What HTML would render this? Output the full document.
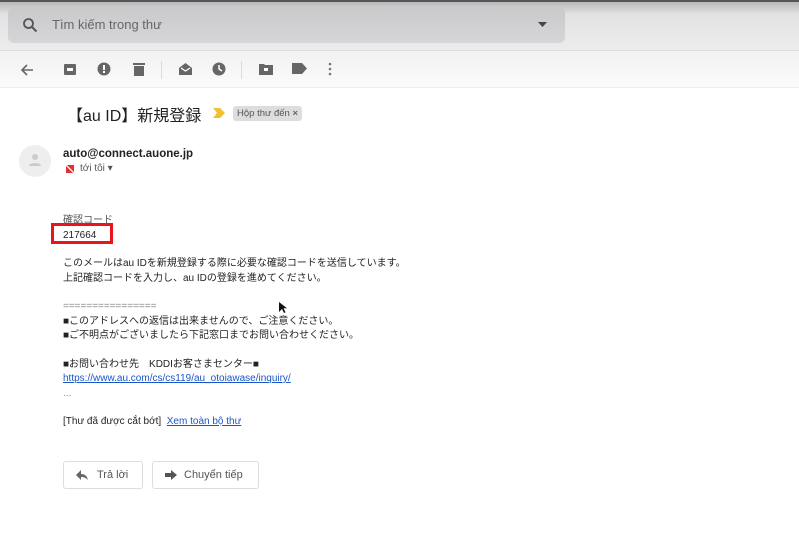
<!DOCTYPE html>
<html><head><meta charset="utf-8"><style>
*{margin:0;padding:0;box-sizing:border-box}
body{width:799px;height:552px;overflow:hidden;background:#fff;font-family:"Liberation Sans","Noto Sans CJK JP",sans-serif;color:#222;position:relative}
.top{position:absolute;left:0;top:0;width:799px;height:50px;background:linear-gradient(#b8b8b8,#e2e2e2 25%,#ececec);border-top:2px solid #555}
.search{position:absolute;left:8px;top:7px;width:557px;height:36px;background:linear-gradient(#c9c9cc,#d6d6d9);border-radius:6px}
.search span{position:absolute;left:44px;top:10px;font-size:13px;color:#666}
.tb{position:absolute;left:0;top:50px;width:799px;height:38px;background:linear-gradient(#f1f1f1,#fbfbfb);border-top:1px solid #ddd;border-bottom:1px solid #eee}
.ic{position:absolute}
.abs{position:absolute;white-space:nowrap}
a{color:#1a55c8;text-decoration:underline}
</style></head><body>
<div class="top"></div>
<div class="search">
<svg class="ic" style="left:14px;top:10px" width="16" height="16" viewBox="0 0 16 16"><circle cx="6.5" cy="6.5" r="4.5" fill="none" stroke="#555" stroke-width="1.8"/><path d="M10 10l4.5 4.5" stroke="#555" stroke-width="2"/></svg>
<span>Tìm kiếm trong thư</span>
<svg class="ic" style="left:530px;top:15px" width="9" height="6"><path d="M0 0h9L4.5 5z" fill="#444"/></svg>
</div>
<div class="tb">
<svg class="ic" style="left:20px;top:12px" width="14" height="14" viewBox="0 0 14 14"><path d="M13 7H2M7 2L2 7l5 5" stroke="#666" stroke-width="1.6" fill="none"/></svg>
<svg class="ic" style="left:63px;top:11px" width="14" height="14"><rect x="1" y="2" width="12" height="11" rx="1" fill="#666"/><rect x="4" y="6" width="6" height="3" fill="#fff"/></svg>
<svg class="ic" style="left:97px;top:11px" width="14" height="14"><circle cx="7" cy="7" r="6.5" fill="#666"/><rect x="6" y="3" width="2" height="5" fill="#fff"/><rect x="6" y="9" width="2" height="2" fill="#fff"/></svg>
<svg class="ic" style="left:132px;top:11px" width="14" height="14"><rect x="1" y="1" width="12" height="2" fill="#666"/><rect x="2" y="4" width="10" height="10" fill="#666"/></svg>
<div class="abs" style="left:161px;top:10px;width:1px;height:18px;background:#ddd"></div>
<svg class="ic" style="left:178px;top:11px" width="15" height="14"><path d="M1 6l6.5-5 6.5 5v7H1z" fill="#666"/><path d="M3 6l4.5 3 4.5-3" stroke="#fff" stroke-width="1.2" fill="none"/></svg>
<svg class="ic" style="left:212px;top:11px" width="14" height="14"><circle cx="7" cy="7" r="6.5" fill="#666"/><path d="M7 3v4l3 2" stroke="#fff" stroke-width="1.5" fill="none"/></svg>
<div class="abs" style="left:241px;top:10px;width:1px;height:18px;background:#ddd"></div>
<svg class="ic" style="left:259px;top:12px" width="14" height="12"><path d="M0 1h5l1 1h8v10H0z" fill="#666"/><rect x="5" y="5" width="4" height="3" fill="#fff"/></svg>
<svg class="ic" style="left:292px;top:12px" width="15" height="11"><path d="M0 0h10l5 5.5-5 5.5H0z" fill="#666"/></svg>
<svg class="ic" style="left:328px;top:11px" width="4" height="14"><circle cx="2" cy="2" r="1.3" fill="#777"/><circle cx="2" cy="7" r="1.3" fill="#777"/><circle cx="2" cy="12" r="1.3" fill="#777"/></svg>
</div>
<div class="abs" style="left:67px;top:102px;font-size:16px;color:#222">【au ID】新規登録</div>
<svg class="ic" style="left:213px;top:108px" width="12" height="10"><path d="M0 0h7l5 5-5 5H0l4-5z" fill="#f2c12e"/></svg>
<div class="abs" style="left:233px;top:106px;background:#ddd;border-radius:3px;font-size:9.5px;color:#555;padding:2px 4px">Hộp thư đến <b style="color:#666">×</b></div>
<div class="abs" style="left:19px;top:145px;width:32px;height:32px;border-radius:50%;background:#eee"></div>
<svg class="ic" style="left:28px;top:153px" width="14" height="14"><circle cx="7" cy="4" r="3" fill="#ccc"/><path d="M1 13c0-4 12-4 12 0z" fill="#ccc"/></svg>
<div class="abs" style="left:63px;top:148px;font-size:11.5px;font-weight:bold;color:#222">auto@connect.auone.jp</div>
<svg class="ic" style="left:65px;top:164px" width="10" height="10"><rect x="1" y="1" width="8" height="8" fill="#d33"/><path d="M0 0l10 10" stroke="#fff" stroke-width="1.3"/></svg>
<div class="abs" style="left:80px;top:163px;font-size:10px;color:#555">tới tôi ▾</div>
<div style="position:absolute;left:63px;top:214px;font-size:10px;line-height:14.5px;color:#222">
<div style="color:#555">確認コード</div>
<div>217664</div>
<div style="height:14px"></div>
<div>このメールはau IDを新規登録する際に必要な確認コードを送信しています。</div>
<div>上記確認コードを入力し、au IDの登録を進めてください。</div>
<div style="height:14px"></div>
<div style="color:#888">================</div>
<div>■このアドレスへの返信は出来ませんので、ご注意ください。</div>
<div>■ご不明点がございましたら下記窓口までお問い合わせください。</div>
<div style="height:14px"></div>
<div>■お問い合わせ先　KDDIお客さまセンター■</div>
<div><a>https://www.au.com/cs/cs119/au_otoiawase/inquiry/</a></div>
<div style="color:#888">...</div>
<div style="height:14px"></div>
<div>[Thư đã được cắt bớt]&nbsp; <a>Xem toàn bộ thư</a></div>
</div>
<div class="abs" style="left:51px;top:223px;width:62px;height:21px;border:3px solid #e8151b"></div>
<div class="abs" style="left:63px;top:461px;width:80px;height:28px;border:1px solid #ddd;border-radius:3px;font-size:11px;color:#555;padding:7px 0 0 33px">Trả lời</div>
<svg class="ic" style="left:76px;top:470px" width="12" height="10"><path d="M5 0L0 5l5 5V7c3 0 5 1 7 3-1-4-3-6-7-6z" fill="#666"/></svg>
<div class="abs" style="left:152px;top:461px;width:107px;height:28px;border:1px solid #ddd;border-radius:3px;font-size:11px;color:#555;padding:7px 0 0 31px">Chuyển tiếp</div>
<svg class="ic" style="left:165px;top:470px" width="12" height="10"><path d="M0 3h6V0l6 5-6 5V7H0z" fill="#555"/></svg>
<svg class="ic" style="left:279px;top:302px" width="8" height="12"><path d="M0 0v10l3-3 2 4 1.5-.7-2-4H8z" fill="#111"/></svg>
</body></html>
